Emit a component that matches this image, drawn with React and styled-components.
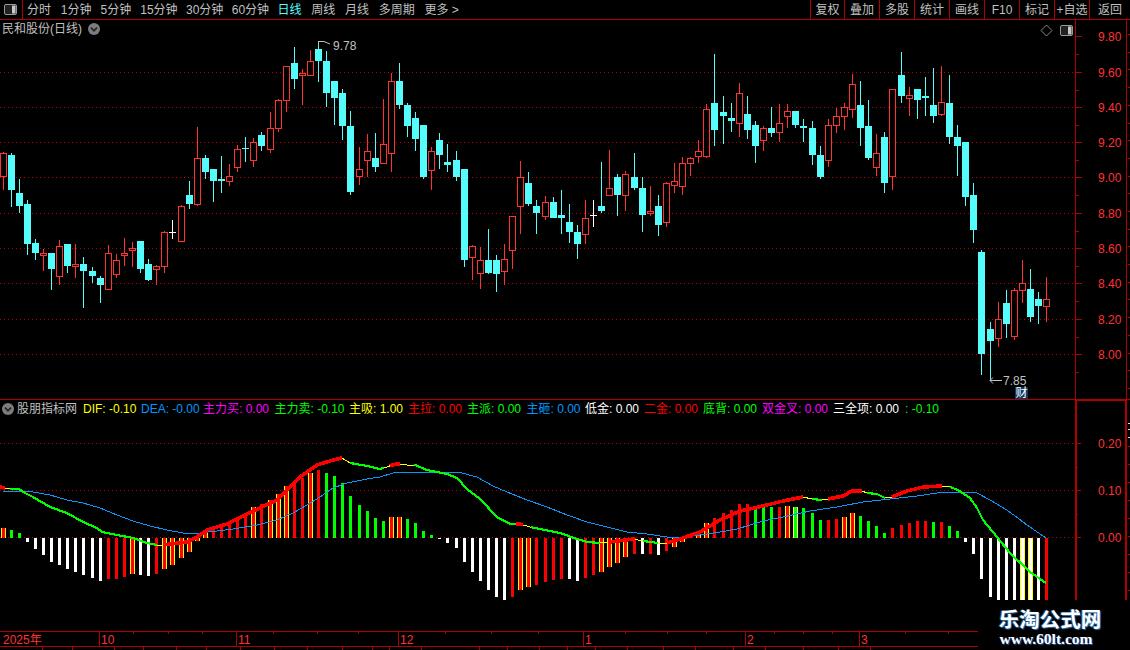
import React from 'react';
import styled, { createGlobalStyle } from 'styled-components';

const FONT = '"Liberation Sans", "Noto Sans CJK SC", sans-serif';
const LINE = '#b00000';
const RED = '#ff3232';
const CYAN = '#54fcfc';
const GRAY = '#c0c0c0';

const Global = createGlobalStyle`
  html, body { margin: 0; background: #000; overflow: hidden; }
`;

const Screen = styled.div`
  position: relative;
  width: 1130px;
  height: 650px;
  background: #000;
  overflow: hidden;
  display: flex;
  flex-direction: column;
  font: 12px/1 ${FONT};
  color: ${GRAY};
`;

const Toolbar = styled.header`
  flex: 0 0 19px;
  display: flex;
  align-items: center;
  border-bottom: 1px solid ${LINE};
`;
const ViewSwitch = styled.div`
  flex: 0 0 23px;
  box-sizing: border-box;
  height: 19px;
  display: flex;
  align-items: center;
  justify-content: center;
  border-right: 1px solid ${LINE};
  padding-right: 2px;
`;
const Periods = styled.nav`
  display: flex;
  gap: 9.75px;
  padding-left: 4px;
  flex: 1;
`;
const Period = styled.span`
  flex: 0 0 ${p => p.$w}px;
  min-width: 0;
  white-space: nowrap;
  color: ${p => (p.$active ? CYAN : GRAY)};
`;
const Actions = styled.div`
  display: flex;
  height: 19px;
`;
const Action = styled.button`
  all: unset;
  box-sizing: border-box;
  width: ${p => p.$w}px;
  height: 19px;
  display: flex;
  align-items: center;
  justify-content: center;
  border-left: 1px solid ${LINE};
  font: 12px/1 ${FONT};
  color: ${GRAY};
  white-space: nowrap;
`;

const Pane = styled.section`
  position: relative;
  flex: 0 0 ${p => p.$h}px;
  display: flex;
  box-sizing: border-box;
  border-bottom: ${p => (p.$ruled ? `1px solid ${LINE}` : 'none')};
`;
const Plot = styled.svg`
  display: block;
  flex: 0 0 1075px;
  height: 100%;
`;
const Axis = styled.svg`
  display: block;
  flex: 0 0 55px;
  height: 100%;
`;
const ChartTitle = styled.div`
  position: absolute;
  left: 2px;
  top: 3px;
  display: flex;
  align-items: center;
  gap: 6px;
  font-size: 12px;
  white-space: nowrap;
`;
const PaneTools = styled.div`
  position: absolute;
  left: 1040px;
  top: 4px;
  display: flex;
  align-items: center;
  gap: 7px;
`;
const Legend = styled.div`
  position: absolute;
  left: 2px;
  top: 2px;
  display: flex;
  align-items: center;
  height: 14px;
  white-space: nowrap;
`;
const LegendName = styled.span`
  flex: 0 0 69px;
  padding-left: 3px;
  box-sizing: border-box;
  color: ${GRAY};
`;
const Reading = styled.span`
  flex: 0 0 ${p => p.$w}px;
  min-width: 0;
  color: ${p => p.$c};
`;
const Badge = styled.span`
  position: absolute;
  left: 1015px;
  top: 367px;
  width: 13px;
  height: 12px;
  background: #0b3a66;
  color: #fff;
  font-size: 12px;
  line-height: 12px;
  text-align: center;
`;
const Price = styled.text`
  fill: ${RED};
  font: 12px ${FONT};
`;
const Note = styled.text`
  fill: ${GRAY};
  font: 12px ${FONT};
`;
const TimeStrip = styled.svg`
  display: block;
  flex: 0 0 19px;
  width: 1130px;
`;
const Watermark = styled.aside`
  position: absolute;
  left: 978px;
  top: 600px;
  width: 152px;
  height: 50px;
  background: #000;
  display: flex;
  flex-direction: column;
  align-items: center;
  padding: 8px 8px 0 0;
  box-sizing: border-box;
  color: #fff;
  gap: 3px;
`;
const MarkName = styled.strong`
  font: 700 20.5px/21px "Noto Sans CJK SC", sans-serif;
  white-space: nowrap;
  text-shadow: 1px 1px 1px #2a6fb0, -1px 0 1px #2a6fb0;
`;
const MarkUrl = styled.span`
  font: 700 15.5px/14px "Liberation Serif", serif;
  white-space: nowrap;
  margin-right: 8px;
  text-shadow: 1px 1px 1px #1d5aa0;
`;

/* [type, centre x, body top, body bottom, wick top, wick bottom] in page pixels */
const CANDLES = [
  ['R',3.5,153,176.7,152,190],['C',11.5,155,190,153,207],['C',19.5,193,206,179,213],['C',27.5,204,244,200,255],
  ['C',35.5,243,253,239,260],['R',43.5,253.3,255.7,249,271],['C',51.5,253,269,253,290],['R',59.5,246.3,276.7,240,285],
  ['C',67.5,244,266,244,273],['R',75.5,264.3,266.7,244,278],['C',83.5,264,271,257,308],['C',92.5,271,276,267,283],
  ['C',100.5,278,285,276,303],['R',108.5,253.3,289.7,245,290],['R',116.5,260.3,274.7,254,278],['R',124.5,253.3,255.7,238,266],
  ['R',132.5,248.3,250.7,242,267],['C',140.5,241,269,241,273],['C',148.5,264,280,259,281],['R',156.5,266.3,269.7,265,285],
  ['R',164.5,232.3,266.7,231,273],['W',172.5,232,233,220,239],['R',181.5,206.3,241.7,205,242],['C',189.5,195,204,181,209],
  ['R',197.5,158.3,204.7,127,206],['C',205.5,158,172,155,179],['C',213.5,169,181,169,202],['C',221.5,179,181,156,193],
  ['R',229.5,176.3,181.7,164,186],['R',237.5,149.3,167.3,145,172],['C',245.5,148,149,137,162],['R',253.5,142.3,160.7,138,167],
  ['C',261.5,135,146,132,151],['R',270.5,128,149.7,112,153],['R',278.5,100,128.7,99,132],['R',286.5,66.3,100.7,66,112],
  ['C',294.5,63,79,47,89],['R',302.5,73.3,75.7,69,105],['R',310.5,61.3,75.7,50,76],['C',318.5,49,61,41,82],
  ['C',326.5,61,93,51,107],['C',334.5,81,98,81,125],['C',342.5,93,126,89,140],['C',350.5,126,192,111,195],
  ['R',359.5,169.3,176.7,147,185],['R',367.5,151,160.7,134,177],['C',375.5,158,167,133,172],['R',383.5,144,163.7,99,164],
  ['R',391.5,81.3,153.7,73,172],['C',399.5,81,105,63,109],['C',407.5,105,126,103,137],['C',415.5,118,139,112,151],
  ['C',423.5,125,177,125,179],['R',431.5,151,170.7,147,190],['C',439.5,140,155,133,169],['C',447.5,162,165,144,172],
  ['C',456.5,160,177,151,181],['C',464.5,169,260,169,267],['R',472.5,246,257.7,245,280],['R',480.5,260,273.7,247,289],
  ['C',488.5,260,273,229,274],['C',496.5,260,274,255,292],['R',504.5,259,271.7,244,285],['R',512.5,216,250.7,216,269],
  ['R',520.5,177,206.7,161,234],['C',528.5,183,204,172,206],['C',536.5,206,213,200,234],['R',545.5,202.3,216.7,196,220],
  ['C',553.5,202,218,197,218],['C',561.5,215,218,190,234],['C',569.5,222,232,204,243],['C',577.5,232,244,225,259],
  ['R',585.5,218,234.7,200,244],['W',593.5,215,216,200,227],['C',601.5,206,211,162,213],['R',609.5,188,195.7,150,196],
  ['C',617.5,177,195,174,216],['R',625.5,174,195.7,171,211],['C',634.5,177,188,153,190],['C',642.5,188,215,177,232],
  ['R',650.5,211.3,213.7,186,216],['C',658.5,206,225,195,236],['R',666.5,183,222.7,182,227],['R',674.5,181,185.7,163,193],
  ['R',682.5,163,186.7,157,195],['R',690.5,158,163.7,157,176],['R',698.5,151,156.7,140,163],['R',706.5,109,156.7,104,158],
  ['C',714.5,103,130,54,146],['C',723.5,112,116,96,144],['C',731.5,118,121,103,132],['R',739.5,93,123.7,83,137],
  ['C',747.5,114,130,96,139],['C',755.5,125,146,121,163],['R',763.5,128,141,126,151],['C',771.5,128,133,107,137],
  ['R',779.5,123,132.7,104,142],['R',787.5,111,117,104,128],['C',795.5,111,125,111,128],['C',803.5,126,128,119,142],
  ['C',812.5,128,155,121,165],['C',820.5,155,177,146,179],['R',828.5,125,160.7,119,167],['R',836.5,116,126,108,133],
  ['R',844.5,107,117,103,130],['R',852.5,84.3,109.3,74,118],['C',860.5,105,128,81,146],['C',868.5,126,158,100,160],
  ['R',876.5,153.3,167.7,134,176],['C',884.5,137,183,132,193],['R',892.5,89.3,176.7,89,190],['C',901.5,75,96,52,103],
  ['R',909.5,95.3,98.7,87,116],['C',917.5,89,100,89,119],['C',925.5,96,98,77,116],['C',933.5,105,116,68,123],
  ['R',941.5,102.3,114.7,66,116],['C',949.5,103,137,75,144],['C',957.5,137,146,125,176],['C',965.5,142,197,142,206],
  ['C',973.5,195,230,183,243],['C',981.5,252,354,250,375],['C',990.5,329,341,322,380],['R',998.5,319.3,338.7,302,347],
  ['C',1006.5,303,324,290,338],['R',1014.5,290.3,336.7,288,340],['R',1022.5,283.3,290.7,260,303],['C',1030.5,289,317,269,322],
  ['C',1038.5,299,306,292,324],['R',1046.5,299.3,306.7,277,322],
];

/* histogram bars, one for each candle: [kind, end y] */
const BARS = [
  ['Y',528],['G',530],['G',533],['W',542],['W',549],['W',555],['W',562],['W',565],['W',569],['W',572],
  ['W',575],['W',578],['W',581],['R',579],['R',579],['R',577],['Y',574],['W',575],['W',576],['R',574],
  ['Y',569],['Y',565],['Y',558],['Y',552],['Y',541],['Y',531],['R',530],['R',526],['R',524],['R',519],
  ['R',514],['Y',507],['R',504],['Y',500],['Y',494],['Y',486],['R',483],['R',478],['Y',473],['R',470],
  ['G',473],['G',476],['G',483],['G',496],['G',505],['G',511],['G',518],['G',521],['Y',517],['Y',517],
  ['G',519],['G',523],['G',531],['G',535],['W',539],['W',543],['W',548],['W',562],['W',572],['W',581],
  ['W',590],['W',597],['W',600],['R',597],['Y',590],['Y',587],['R',585],['R',582],['R',580],['R',579],
  ['W',579],['W',581],['R',578],['R',575],['Y',572],['Y',567],['Y',563],['Y',557],['R',554],['W',554],
  ['R',554],['W',555],['R',551],['Y',547],['Y',542],['R',535],['Y',531],['Y',523],['R',518],['R',513],
  ['R',510],['R',504],['R',504],['G',506],['G',507],['G',507],['R',507],['Y',506],['L',507],['G',508],
  ['G',513],['G',520],['R',520],['R',519],['Y',517],['Y',513],['G',516],['G',521],['G',526],['G',533],
  ['R',528],['R',525],['R',523],['R',521],['R',521],['G',522],['R',522],['G',526],['G',531],['W',542],
  ['W',554],['W',579],['W',597],['W',600],['W',600],['W',600],['V',600],['V',600],['W',600],['R',600],
];

const DEA = [
  [3,492],[20,491],[33,492],[50,495],[67,500],[83,503],[100,508],[117,515],[133,521],[150,526],[167,530],[183,533],[200,533],
  [217,531],[233,529],[257,525],[277,520],[293,513],[307,505],[320,497],[333,488],[347,483],[367,479],[380,477],[393,473],
  [413,472],[458,472],[477,477],[493,486],[507,492],[527,500],[547,507],[567,515],[587,522],[607,527],[627,532],[647,534],
  [667,537],[683,537],[700,535],[720,532],[737,529],[750,525],[763,521],[783,517],[810,511],[837,507],[863,502],[890,499],
  [917,496],[937,493],[963,492],[977,493],[990,500],[1007,510],[1027,525],[1046,538],
];

const DIF = [
  [0,487],[5,488],[10,489],[19,489],[25,493],[33,497],[50,507],[67,513],[83,522],[97,528],[102,532],[117,535],[133,538],[147,543],
  [157,545],[163,545],[187,542],[197,537],[207,530],[227,524],[243,516],[260,508],[277,500],[287,490],[300,477],[317,465],[333,460],
  [342,458],[350,463],[367,466],[380,469],[387,467],[392,465],[397,464],[407,465],[415,465],[427,470],[447,474],[457,478],[467,489],
  [480,499],[497,517],[510,524],[520,524],[530,527],[540,529],[560,533],[577,539],[587,542],[600,543],[610,542],[633,539],[643,541],
  [658,543],[667,543],[680,539],[700,532],[720,520],[740,511],[750,509],[767,505],[783,501],[803,497],[812,499],[822,500],[828,499],
  [843,496],[852,491],[862,491],[867,493],[877,494],[885,498],[892,497],[907,491],[923,487],[942,486],[950,487],[958,490],[970,498],
  [977,508],[983,520],[997,537],[1010,553],[1030,572],[1046,583],
];

const DIF_RUNS = [
  [0,5,'R'],[5,10,'Y'],[10,157,'G'],[157,163,'Y'],[163,342,'R'],[342,350,'Y'],[350,384,'G'],[384,390,'Y'],[390,400,'R'],
  [400,414,'Y'],[414,516,'G'],[516,523,'R'],[523,531,'Y'],[531,600,'G'],[600,608,'Y'],[608,635,'R'],[635,643,'Y'],[643,658,'G'],
  [658,667,'Y'],[667,803,'R'],[803,812,'Y'],[812,822,'G'],[822,828,'Y'],[828,862,'R'],[862,867,'Y'],[867,885,'G'],[885,892,'Y'],
  [892,942,'R'],[942,950,'Y'],[950,1046,'G'],
];
const RUN_STYLE = { R: ['#ff0000', 3.6], G: ['#00ff00', 2.2], Y: ['#ffff00', 1] };

const difAt = x => {
  for (let i = 1; i < DIF.length; i++) {
    if (x <= DIF[i][0]) {
      const [a, b] = [DIF[i - 1], DIF[i]];
      return a[1] + ((b[1] - a[1]) * (x - a[0])) / (b[0] - a[0]);
    }
  }
  return DIF[DIF.length - 1][1];
};
const runPoints = (x0, x1) =>
  [[x0, difAt(x0)], ...DIF.filter(p => p[0] > x0 && p[0] < x1), [x1, difAt(x1)]].map(p => p.join(',')).join(' ');

const PRICE_ROWS = [
  [36, '9.80'], [72, '9.60'], [107, '9.40'], [142, '9.20'], [177, '9.00'],
  [213, '8.80'], [248, '8.60'], [283, '8.40'], [319, '8.20'], [354, '8.00'],
];
const MACD_ROWS = [[443, '0.20'], [490, '0.10'], [537, '0.00']];

const TOOL_PERIODS = [
  ['分时', 24], ['1分钟', 30], ['5分钟', 30], ['15分钟', 36], ['30分钟', 36], ['60分钟', 36],
  ['日线', 24, true], ['周线', 24], ['月线', 24], ['多周期', 36], ['更多 >', 36],
];
const TOOL_ACTIONS = [
  ['复权', 34], ['叠加', 35], ['多股', 35], ['统计', 35], ['画线', 35], ['F10', 35], ['标记', 35], ['+自选', 35], ['返回', 41],
];
const READINGS = [
  ['DIF: -0.10', '#ffff00', 58], ['DEA: -0.00', '#0096ff', 62], ['主力买: 0.00', '#ff00ff', 71.5], ['主力卖: -0.10', '#00ff00', 74.5],
  ['主吸: 1.00', '#ffff00', 59], ['主拉: 0.00', '#ff0000', 59], ['主派: 0.00', '#00ff00', 59.5], ['主砸: 0.00', '#0096ff', 58.5],
  ['低金: 0.00', '#ffffff', 59], ['二金: 0.00', '#ff0000', 59], ['底背: 0.00', '#00ff00', 59], ['双金叉: 0.00', '#ff00ff', 71],
  ['三全项: 0.00', '#ffffff', 72], [': -0.10', '#00ff00', 40],
];
const MONTHS = [[3, '2025年', false], [100, '10', true], [237, '11', true], [399, '12', true], [584, '1', true], [746, '2', true], [860, '3', true]];
const MINOR = [133, 168, 202, 273, 317, 358, 445, 491, 538, 625, 667, 706, 774, 803, 832, 905, 948];
const TAB_TICKS = [42, 72, 114, 143, 176, 206, 240, 274, 307, 342, 372, 389, 421, 479, 507, 539, 567, 595, 627, 663, 695, 733, 765, 803, 838, 870];

const dotted = { stroke: '#b80000', strokeDasharray: '1 3', shapeRendering: 'crispEdges' };

const Candle = ({ d: [t, c, top, bot, hi, lo] }) => {
  const cx = Math.floor(c);
  const wick = <rect x={cx} y={hi} width="1" height={lo - hi} fill={t === 'C' ? CYAN : t === 'R' ? RED : '#fff'} />;
  if (t === 'W') {
    return <g>{wick}<rect x={cx - 3} y={top} width="7" height="1" fill="#fff" /></g>;
  }
  if (t === 'C') {
    const y = Math.round(top);
    return <g>{wick}<rect x={cx - 3} y={y} width="7" height={Math.max(1, Math.round(bot) - y)} fill={CYAN} /></g>;
  }
  const y1 = Math.floor(top);
  const y2 = Math.ceil(bot);
  return <g>{wick}<rect x={cx - 2.5} y={y1 + 0.5} width="6" height={y2 - y1 - 1} fill="#000" stroke={RED} /></g>;
};

const BAR_FILL = {
  R: ['#ff0000'], G: ['#00ff00'], W: ['#ffffff'],
  Y: ['#ffff00', '#ff0000'], L: ['#ffff66', '#00ff00'], V: ['#ffff00', '#ffffff'],
};
const Bar = ({ x, kind, end }) => {
  const cx = Math.floor(x);
  const y = Math.min(end, 538);
  const h = Math.abs(end - 538);
  const [outer, inner] = BAR_FILL[kind];
  if (!inner) return <rect x={cx - 1} y={y} width="3" height={h} fill={outer} />;
  return (
    <g>
      <rect x={cx - 2} y={y} width="5" height={h} fill={outer} />
      <rect x={cx - 1} y={y} width="3" height={h} fill={inner} />
    </g>
  );
};

const SplitIcon = () => (
  <svg width="13" height="11" viewBox="0 0 13 11">
    <rect x="0.5" y="0.5" width="12" height="10" rx="1.5" fill="#222" stroke="#9a9a9a" />
    <rect x="8" y="1.5" width="3.5" height="8" fill="#c8c8c8" />
  </svg>
);
const Chevron = () => (
  <svg width="12" height="12" viewBox="0 0 12 12">
    <circle cx="6" cy="6" r="6" fill="#7c7c7c" />
    <path d="M3 4.6 L6 7.8 L9 4.6" fill="none" stroke="#222" strokeWidth="1.6" />
  </svg>
);

const RightEdge = ({ from, to, step }) => {
  const out = [];
  for (let y = from; y < to; y += step) out.push(<rect key={y} x="1128" y={Math.round(y)} width="2" height="1" fill={LINE} />);
  return <>{out}</>;
};

export default function App() {
  return (
    <Screen>
      <Global />
      <Toolbar>
        <ViewSwitch><SplitIcon /></ViewSwitch>
        <Periods>
          {TOOL_PERIODS.map(([label, w, active]) => (
            <Period key={label} $w={w} $active={active}>{label}</Period>
          ))}
        </Periods>
        <Actions>
          {TOOL_ACTIONS.map(([label, w]) => <Action key={label} $w={w}>{label}</Action>)}
        </Actions>
      </Toolbar>

      <Pane $h={380} $ruled>
        <Plot viewBox="0 20 1075 379" preserveAspectRatio="none">
          {PRICE_ROWS.slice(1).map(([y]) => (
            <line key={y} x1="0" x2="1075" y1={y + 0.5} y2={y + 0.5} {...dotted} />
          ))}
          <g shapeRendering="crispEdges">
            {CANDLES.map(d => <Candle key={d[1]} d={d} />)}
          </g>
          <g fill="none" stroke={GRAY}>
            <path d="M318.5 41.5 H324 L330 44 M318.5 41.5 V45" />
            <path d="M990 380.5 H1002 M990 380.5 l3 -3 M990 380.5 l3 3" />
          </g>
          <Note x="333" y="50">9.78</Note>
          <Note x="1003" y="385">7.85</Note>
        </Plot>
        <Axis viewBox="1075 20 55 379" preserveAspectRatio="none">
          <g shapeRendering="crispEdges">
            <rect x="1075" y="20" width="1" height="379" fill={LINE} />
            <rect x="1126" y="20" width="1" height="379" fill={LINE} />
            {PRICE_ROWS.map(([y]) => <rect key={y} x="1076" y={y} width="6" height="1" fill={LINE} />)}
            {PRICE_ROWS.map(([y]) => <rect key={y} x="1076" y={y + 18} width="3" height="1" fill={LINE} />)}
            <RightEdge from={34} to={399} step={17.7} />
          </g>
          {PRICE_ROWS.map(([y, label]) => <Price key={y} x="1098" y={y + 5}>{label}</Price>)}
        </Axis>
        <ChartTitle>民和股份(日线)<Chevron /></ChartTitle>
        <PaneTools>
          <svg width="13" height="13" viewBox="0 0 13 13">
            <path d="M6.5 1 L12 6.5 L6.5 12 L1 6.5 Z" fill="none" stroke="#8a8a8a" />
          </svg>
          <SplitIcon />
        </PaneTools>
        <Badge>财</Badge>
      </Pane>

      <Pane $h={231}>
        <Plot viewBox="0 400 1075 231" preserveAspectRatio="none">
          {MACD_ROWS.map(([y]) => (
            <line key={y} x1="0" x2="1075" y1={y + 0.5} y2={y + 0.5} {...dotted} />
          ))}
          <g shapeRendering="crispEdges">
            {BARS.map(([kind, end], i) => <Bar key={i} x={CANDLES[i][1]} kind={kind} end={end} />)}
          </g>
          <g fill="none" shapeRendering="crispEdges">
            <polyline points={DEA.map(p => p.join(',')).join(' ')} stroke="#0a96ff" strokeWidth="1" />
            {DIF_RUNS.map(([a, b, kind]) => (
              <polyline key={a} points={runPoints(a, b)} stroke={RUN_STYLE[kind][0]} strokeWidth={RUN_STYLE[kind][1]} />
            ))}
          </g>
        </Plot>
        <Axis viewBox="1075 400 55 231" preserveAspectRatio="none">
          <g shapeRendering="crispEdges">
            <rect x="1075" y="400" width="2" height="200" fill={LINE} />
            <rect x="1125" y="400" width="2" height="200" fill={LINE} />
            <rect x="1075" y="400" width="52" height="1" fill={LINE} />
            {MACD_ROWS.map(([y]) => <rect key={y} x="1077" y={y} width="4" height="1" fill={LINE} />)}
            <rect x="1077" y="467" width="1" height="1" fill={LINE} />
            <rect x="1077" y="514" width="1" height="1" fill={LINE} />
            <rect x="1128" y="423" width="2" height="1" fill="#ddd" />
            <rect x="1128" y="429" width="2" height="1" fill="#ddd" />
            <rect x="1128" y="437" width="2" height="1" fill="#ddd" />
            <RightEdge from={446} to={600} step={18} />
          </g>
          {MACD_ROWS.map(([y, label]) => <Price key={y} x="1098" y={y + 5}>{label}</Price>)}
        </Axis>
        <Legend>
          <Chevron />
          <LegendName>股朋指标网</LegendName>
          {READINGS.map(([text, color, w]) => <Reading key={text} $c={color} $w={w}>{text}</Reading>)}
        </Legend>
      </Pane>

      <TimeStrip viewBox="0 631 1130 19">
        <g shapeRendering="crispEdges" fill={LINE}>
          <rect x="0" y="631" width="1130" height="1" />
          <rect x="0" y="646" width="1130" height="1" />
          {MONTHS.filter(m => m[2]).map(([x]) => <rect key={x} x={x - 1} y="631" width="1" height="15" />)}
          {MINOR.map(x => <rect key={x} x={x} y="632" width="1" height="2" />)}
          {TAB_TICKS.map(x => <rect key={x} x={x} y="647" width="1" height="3" />)}
        </g>
        {MONTHS.map(([x, label]) => <Price key={label} x={x + (label.length < 3 ? 1 : 0)} y="644">{label}</Price>)}
      </TimeStrip>

      <Watermark>
        <MarkName>乐淘公式网</MarkName>
        <MarkUrl>www.60lt.com</MarkUrl>
      </Watermark>
    </Screen>
  );
}
